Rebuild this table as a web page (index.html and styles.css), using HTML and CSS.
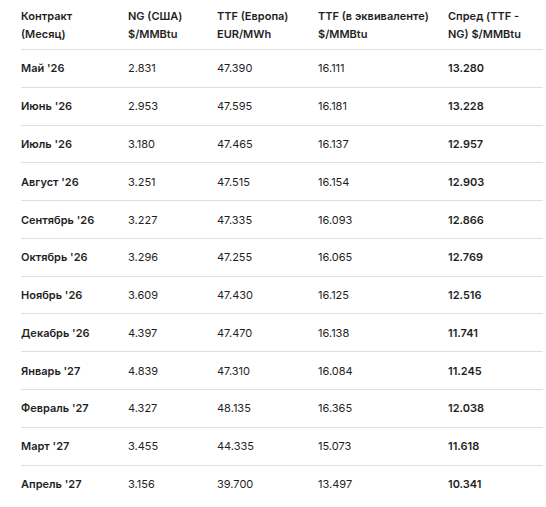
FILE: index.html
```html
<!DOCTYPE html>
<html lang="ru">
<head>
<meta charset="utf-8">
<link rel="stylesheet" href="styles.css">
</head>
<body>
<div class="wrap">
<table class="grid">
<colgroup>
<col class="c1"><col class="c2"><col class="c3"><col class="c4"><col class="c5">
</colgroup>
<thead>
<tr>
<th>Контракт<br>(Месяц)</th>
<th>NG (США)<br>$/MMBtu</th>
<th>TTF (Европа)<br>EUR/MWh</th>
<th>TTF (в эквиваленте)<br>$/MMBtu</th>
<th>Спред (TTF -<br>NG) $/MMBtu</th>
</tr>
</thead>
<tbody>
<tr><td class="b">Май '26</td><td>2.831</td><td>47.390</td><td>16.111</td><td class="b">13.280</td></tr>
<tr><td class="b">Июнь '26</td><td>2.953</td><td>47.595</td><td>16.181</td><td class="b">13.228</td></tr>
<tr><td class="b">Июль '26</td><td>3.180</td><td>47.465</td><td>16.137</td><td class="b">12.957</td></tr>
<tr><td class="b">Август '26</td><td>3.251</td><td>47.515</td><td>16.154</td><td class="b">12.903</td></tr>
<tr><td class="b">Сентябрь '26</td><td>3.227</td><td>47.335</td><td>16.093</td><td class="b">12.866</td></tr>
<tr><td class="b">Октябрь '26</td><td>3.296</td><td>47.255</td><td>16.065</td><td class="b">12.769</td></tr>
<tr><td class="b">Ноябрь '26</td><td>3.609</td><td>47.430</td><td>16.125</td><td class="b">12.516</td></tr>
<tr><td class="b">Декабрь '26</td><td>4.397</td><td>47.470</td><td>16.138</td><td class="b">11.741</td></tr>
<tr><td class="b">Январь '27</td><td>4.839</td><td>47.310</td><td>16.084</td><td class="b">11.245</td></tr>
<tr><td class="b">Февраль '27</td><td>4.327</td><td>48.135</td><td>16.365</td><td class="b">12.038</td></tr>
<tr><td class="b">Март '27</td><td>3.455</td><td>44.335</td><td>15.073</td><td class="b">11.618</td></tr>
<tr><td class="b">Апрель '27</td><td>3.156</td><td>39.700</td><td>13.497</td><td class="b">10.341</td></tr>
</tbody>
</table>
</div>
</body>
</html>
```
FILE: styles.css
```css
html, body {
  margin: 0;
  padding: 0;
  background: #ffffff;
}
.wrap {
  padding: 0 3px 0 21px;
}
.grid {
  width: 522px;
  border-collapse: collapse;
  table-layout: fixed;
  font-family: Inter, Roboto, "Noto Sans", sans-serif;
  font-size: 11px;
  line-height: 18px;
  color: #1f1f1f;
}
.c1 { width: 107px; }
.c2 { width: 89px; }
.c3 { width: 101px; }
.c4 { width: 130px; }
.c5 { width: 95px; }
.grid th {
  text-align: left;
  font-weight: 600;
  padding: 6.5px 0;
  border-bottom: 1px solid #dedede;
  vertical-align: middle;
}
.grid td {
  padding: 9.4px 0;
  border-bottom: 1px solid #dedede;
  vertical-align: middle;
  white-space: nowrap;
}
.grid tbody tr:last-child td {
  border-bottom: none;
}
.grid td.b {
  font-weight: 600;
}
```
